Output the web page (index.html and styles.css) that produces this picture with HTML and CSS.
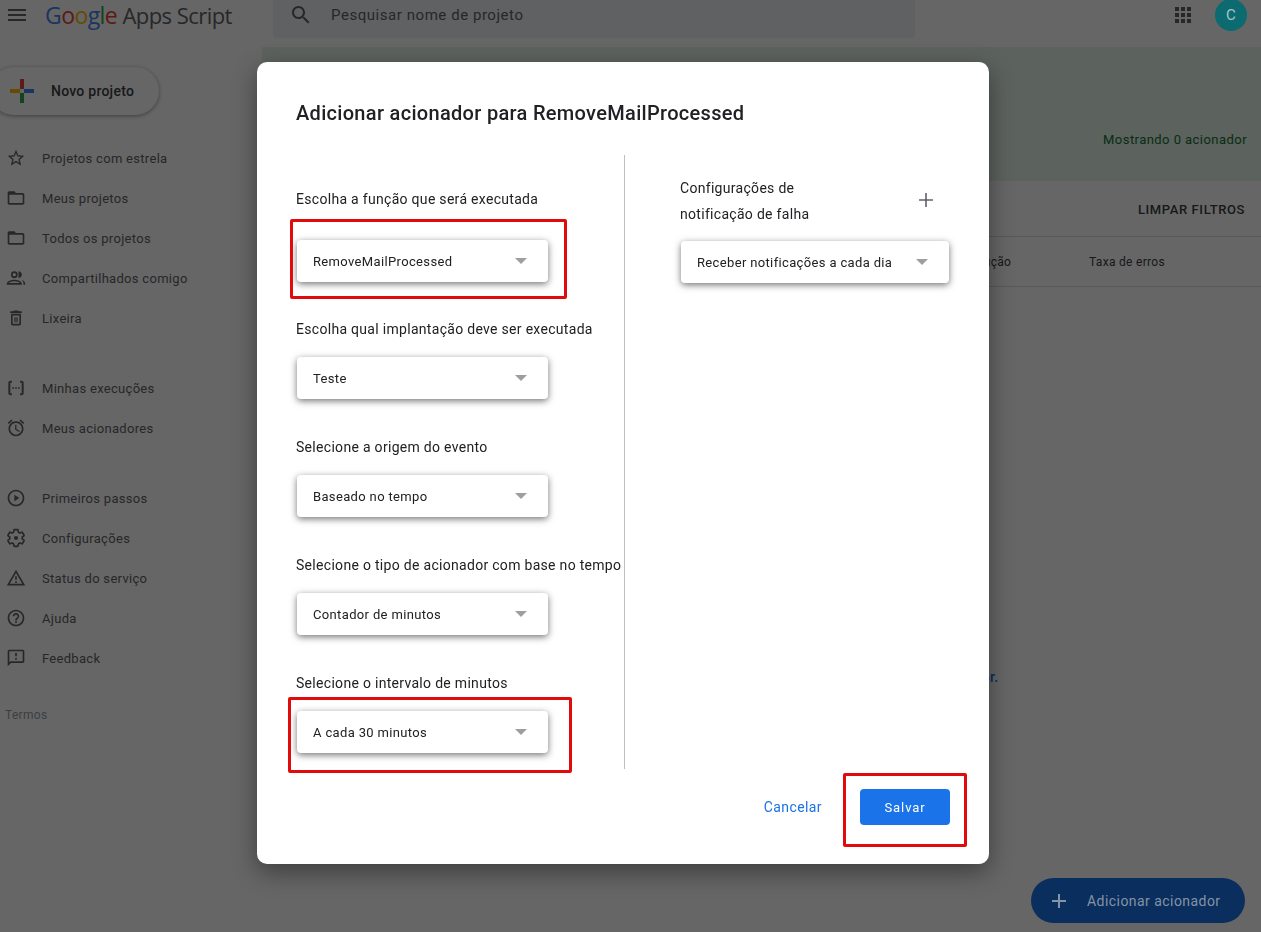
FILE: index.html
```html
<!DOCTYPE html>
<html lang="pt-BR">
<head>
<meta charset="utf-8">
<title>Google Apps Script</title>
<link rel="stylesheet" href="styles.css">
</head>
<body>
<div id="page">
	<header class="topbar">
		<svg class="menu_icon" width="18" height="12" viewBox="0 0 18 12"><path d="M0 0h18v2H0zM0 5h18v2H0zM0 10h18v2H0z"/></svg>
		<div class="logo">
			<span class="c_blue">G</span><span class="c_red">o</span><span class="c_yellow">o</span><span class="c_blue">g</span><span class="c_green">l</span><span class="c_red">e</span>
			<span class="logo_name">Apps Script</span>
		</div>
		<div class="search">
			<svg width="24" height="24" viewBox="0 0 24 24"><path d="M15.5 14h-.79l-.28-.27C15.41 12.59 16 11.11 16 9.5 16 5.91 13.09 3 9.5 3S3 5.91 3 9.5 5.91 16 9.5 16c1.61 0 3.09-.59 4.23-1.57l.27.28v.79l5 4.99L20.49 19l-4.99-5zm-6 0C7.01 14 5 11.99 5 9.5S7.01 5 9.5 5 14 7.01 14 9.5 11.99 14 9.5 14z"/></svg>
			<span>Pesquisar nome de projeto</span>
		</div>
		<svg class="apps_icon" width="18" height="18" viewBox="0 0 18 18"><path d="M1 1h4v4H1zM7 1h4v4H7zM13 1h4v4h-4zM1 7h4v4H1zM7 7h4v4H7zM13 7h4v4h-4zM1 13h4v4H1zM7 13h4v4H7zM13 13h4v4h-4z"/></svg>
		<div class="avatar">C</div>
	</header>

	<div class="body_row">
		<nav class="sidebar">
			<div class="new_project">
				<svg width="24" height="24" viewBox="0 0 24 24"><path fill="#ea4335" d="M10 0h4v10h-4z"/><path fill="#4285f4" d="M14 10h10v4H14z"/><path fill="#34a853" d="M10 14h4v10h-4z"/><path fill="#fbbc05" d="M0 10h10v4H0z"/></svg>
				<span>Novo projeto</span>
			</div>
			<ul class="nav_group">
				<li><svg viewBox="0 0 24 24"><path d="M22 9.24l-7.19-.62L12 2 9.19 8.63 2 9.24l5.46 4.73L5.82 21 12 17.27 18.18 21l-1.63-7.03L22 9.24zM12 15.4l-3.76 2.27 1-4.28-3.32-2.88 4.38-.38L12 6.1l1.71 4.04 4.38.38-3.32 2.88 1 4.28L12 15.4z"/></svg>Projetos com estrela</li>
				<li><svg viewBox="0 0 24 24"><path d="M20 6h-8l-2-2H4c-1.1 0-1.99.9-1.99 2L2 18c0 1.1.9 2 2 2h16c1.1 0 2-.9 2-2V8c0-1.1-.9-2-2-2zm0 12H4V8h16v10z"/></svg>Meus projetos</li>
				<li><svg viewBox="0 0 24 24"><path d="M20 6h-8l-2-2H4c-1.1 0-1.99.9-1.99 2L2 18c0 1.1.9 2 2 2h16c1.1 0 2-.9 2-2V8c0-1.1-.9-2-2-2zm0 12H4V8h16v10z"/></svg>Todos os projetos</li>
				<li><svg viewBox="0 0 24 24"><path d="M10 12a4 4 0 1 0 0-8 4 4 0 0 0 0 8zm0-6a2 2 0 1 1 0 4 2 2 0 0 1 0-4zM10 14c-3.3 0-9 1.6-9 4.5V20h18v-1.500C19 15.600 13.300 14 10 14zm-6.700 4c.8-1 4-2 6.700-2s5.900 1 6.700 2H3.300zM15 4v8c2.200 0 4-1.800 4-4s-1.800-4-4-4zM18 14c1.900.7 3 2.400 3 4.500V20h2v-1.500c0-2.200-2.500-4-5-4.500z"/></svg>Compartilhados comigo</li>
				<li><svg viewBox="0 0 24 24"><path d="M6 19c0 1.100.9 2 2 2h8c1.100 0 2-.9 2-2V7H6v12zM8 9h8v10H8V9zm7.500-5l-1-1h-5l-1 1H5v2h14V4h-3.500zM10 11h1.500v6H10zM12.500 11H14v6h-1.500z"/></svg>Lixeira</li>
			</ul>
			<ul class="nav_group">
				<li><svg viewBox="0 0 24 24"><path class="braces" d="M7 4.500H5.500A1.500 1.500 0 0 0 4 6v12a1.500 1.500 0 0 0 1.500 1.500H7M17 4.500h1.500A1.500 1.500 0 0 1 20 6v12a1.500 1.500 0 0 1-1.500 1.500H17"/><path d="M7.500 11h2v2h-2zM11 11h2v2h-2zM14.500 11h2v2h-2z"/></svg>Minhas execuções</li>
				<li><svg viewBox="0 0 24 24"><path d="M22 5.720l-4.600-3.860-1.290 1.530 4.600 3.860L22 5.720zM7.880 3.390L6.600 1.860 2 5.710l1.290 1.530 4.590-3.850zM12.500 8H11v6l4.750 2.850.75-1.230-4-2.370V8zM12 4c-4.970 0-9 4.030-9 9s4.020 9 9 9c4.970 0 9-4.030 9-9s-4.030-9-9-9zm0 16c-3.870 0-7-3.130-7-7s3.130-7 7-7 7 3.130 7 7-3.130 7-7 7z"/></svg>Meus acionadores</li>
			</ul>
			<ul class="nav_group">
				<li><svg viewBox="0 0 24 24"><path d="M10 8v8l6-4zM12 2C6.480 2 2 6.480 2 12s4.480 10 10 10 10-4.480 10-10S17.520 2 12 2zm0 18c-4.410 0-8-3.590-8-8s3.590-8 8-8 8 3.590 8 8-3.590 8-8 8z"/></svg>Primeiros passos</li>
				<li><svg viewBox="0 0 24 24"><path class="gear" d="M19.430 12.980c.04-.32.07-.64.07-.98s-.03-.66-.07-.98l2.110-1.650c.19-.15.24-.42.12-.64l-2-3.460c-.12-.22-.39-.3-.61-.22l-2.490 1c-.52-.4-1.080-.73-1.690-.98l-.38-2.650C14.460 2.180 14.250 2 14 2h-4c-.25 0-.46.18-.49.42l-.38 2.650c-.61.25-1.170.59-1.690.98l-2.490-1c-.23-.09-.49 0-.61.22l-2 3.460c-.13.22-.07.49.12.64l2.110 1.650c-.04.32-.07.65-.07.98s.03.66.07.98l-2.110 1.650c-.19.15-.24.42-.12.64l2 3.460c.12.22.39.3.61.22l2.490-1c.52.4 1.080.73 1.690.98l.38 2.650c.03.24.24.42.49.42h4c.25 0 .46-.18.49-.42l.38-2.650c.61-.25 1.170-.59 1.690-.98l2.490 1c.23.09.49 0 .61-.22l2-3.460c.12-.22.07-.49-.12-.64l-2.110-1.650z"/><circle cx="12" cy="12" r="2.500"/></svg>Configurações</li>
				<li><svg viewBox="0 0 24 24"><path d="M12 5.990L19.530 19H4.470L12 5.990M12 2L1 21h22L12 2zm1 14h-2v2h2v-2zm0-6h-2v4h2v-4z"/></svg>Status do serviço</li>
				<li><svg viewBox="0 0 24 24"><path d="M11 18h2v-2h-2v2zm1-16C6.480 2 2 6.480 2 12s4.480 10 10 10 10-4.480 10-10S17.520 2 12 2zm0 18c-4.410 0-8-3.590-8-8s3.590-8 8-8 8 3.590 8 8-3.590 8-8 8zm0-14c-2.210 0-4 1.790-4 4h2c0-1.100.9-2 2-2s2 .9 2 2c0 2-3 1.750-3 5h2c0-2.250 3-2.500 3-5 0-2.210-1.790-4-4-4z"/></svg>Ajuda</li>
				<li><svg viewBox="0 0 24 24"><path d="M20 2H4c-1.100 0-2 .9-2 2v18l4-4h14c1.100 0 2-.9 2-2V4c0-1.100-.9-2-2-2zm0 14H5.170L4 17.170V4h16v12zM11 12h2v2h-2zm0-6h2v4h-2z"/></svg>Feedback</li>
			</ul>
			<div class="terms">Termos</div>
		</nav>

		<main class="main">
			<div class="banner">Mostrando 0 acionador</div>
			<div class="filters">LIMPAR FILTROS</div>
			<div class="table_head">
				<span class="col_a">Última execução</span>
				<span>Taxa de erros</span>
			</div>
			<p class="empty">Nenhum acionador encontrado. <a>Adicionar acionador.</a></p>
		</main>
	</div>
	<div class="fab">
		<svg width="24" height="24" viewBox="0 0 24 24"><path d="M19 13h-6v6h-2v-6H5v-2h6V5h2v6h6z"/></svg>
		<span>Adicionar acionador</span>
	</div>
</div>

<div class="dimmed"></div>

<div class="dialog">
	<h1>Adicionar acionador para RemoveMailProcessed</h1>
	<div class="columns">
		<div class="col_left">
			<div class="field field_first">
				<label>Escolha a função que será executada</label>
				<div class="select"><span>RemoveMailProcessed</span><i></i></div>
			</div>
			<div class="field">
				<label>Escolha qual implantação deve ser executada</label>
				<div class="select"><span>Teste</span><i></i></div>
			</div>
			<div class="field">
				<label>Selecione a origem do evento</label>
				<div class="select"><span>Baseado no tempo</span><i></i></div>
			</div>
			<div class="field">
				<label>Selecione o tipo de acionador com base no tempo</label>
				<div class="select"><span>Contador de minutos</span><i></i></div>
			</div>
			<div class="field">
				<label>Selecione o intervalo de minutos</label>
				<div class="select"><span>A cada 30 minutos</span><i></i></div>
			</div>
		</div>
		<div class="col_right">
			<div class="notify_head">
				<span>Configurações de notificação de falha</span>
				<svg width="24" height="24" viewBox="0 0 24 24"><path d="M19 12.800h-6.200V19h-1.600v-6.200H5v-1.600h6.200V5h1.600v6.200H19z"/></svg>
			</div>
			<div class="select select_wide"><span>Receber notificações a cada dia</span><i></i></div>
		</div>
	</div>
	<div class="actions">
		<a class="cancel">Cancelar</a>
		<button class="save">Salvar</button>
	</div>
	<div class="mark mark_function"></div>
	<div class="mark mark_interval"></div>
	<div class="mark mark_save"></div>
</div>
</body>
</html>
```

FILE: styles.css
```css
* {
    box-sizing: border-box;
}

html, body {
    margin: 0;
    height: 100%;
    overflow: hidden;
}

body {
    font-family: Roboto, "Noto Sans", sans-serif;
    font-size: 13px;
    color: #3c4043;
    background-color: #fff;
}

#page {
    position: relative;
    height: 932px;
    overflow: hidden;
}

/* header */
.topbar {
    display: flex;
    align-items: center;
    height: 30px;
    margin-bottom: 17px;
    padding-left: 8px;
}

.menu_icon {
    flex: none;
    fill: #5f6368;
}

.logo {
    flex: none;
    width: 228px;
    margin-left: 19px;
    font-family: "Open Sans", Roboto, sans-serif;
    font-size: 23px;
    letter-spacing: -0.6px;
    white-space: nowrap;
}

.logo_name {
    font-size: 22px;
    color: #5f6368;
    letter-spacing: -0.55px;
}

.c_blue { color: #4285f4; }
.c_red { color: #ea4335; }
.c_yellow { color: #fbbc05; }
.c_green { color: #34a853; }

.search {
    flex: none;
    display: flex;
    align-items: center;
    align-self: flex-start;
    width: 642px;
    height: 38px;
    padding: 0 0 9px 16px;
    background-color: #f1f3f4;
    border-radius: 0 0 4px 4px;
    font-size: 15px;
    letter-spacing: 0.55px;
    color: #5f6368;
}

.search svg {
    margin-right: 18px;
    fill: #5f6368;
}

.apps_icon {
    flex: none;
    margin-left: 259px;
    fill: #5f6368;
}

.avatar {
    position: relative;
    z-index: 2;
    flex: none;
    width: 32px;
    height: 32px;
    margin-left: 23px;
    border-radius: 50%;
    background-color: #0b6b70;
    color: #a5c4c6;
    font-size: 15px;
    line-height: 32px;
    text-align: center;
}

.body_row {
    display: flex;
}

/* sidebar */
.sidebar {
    flex: none;
    width: 262px;
}

.new_project {
    display: flex;
    align-items: center;
    width: 169px;
    height: 48px;
    margin: 20px 0 23px -10px;
    padding-left: 20px;
    border-radius: 24px;
    background-color: #fff;
    box-shadow: 0 1px 4px rgba(0,0,0,.4);
    font-size: 14px;
    font-weight: 500;
    letter-spacing: .25px;
}

.new_project span {
    margin-left: 17px;
}

.nav_group {
    margin: 0 0 30px;
    padding: 0;
    list-style: none;
}

.nav_group li {
    display: flex;
    align-items: center;
    height: 40px;
    padding-left: 6px;
    letter-spacing: .3px;
    color: #5f6368;
}

.nav_group svg {
    flex: none;
    width: 20px;
    height: 20px;
    margin-right: 16px;
    fill: #5f6368;
}

.gear {
    fill: none;
    stroke: #5f6368;
    stroke-width: 2;
}

.braces {
    fill: none;
    stroke: #5f6368;
    stroke-width: 2.4;
}

.terms {
    margin-top: 1px;
    padding-left: 5px;
    font-size: 12px;
    letter-spacing: .3px;
    color: #9aa0a6;
}

/* main */
.main {
    flex: 1;
}

.banner {
    display: flex;
    align-items: center;
    justify-content: flex-end;
    height: 134px;
    padding: 50px 14px 0 0;
    background-color: #e6f4ea;
    color: #137333;
    letter-spacing: .45px;
}

.filters {
    height: 56px;
    padding-right: 16px;
    border-bottom: 1px solid #dadce0;
    font-weight: 500;
    line-height: 58px;
    letter-spacing: .6px;
    text-align: right;
    color: #3c4043;
}

.table_head {
    display: flex;
    height: 50px;
    padding-left: 656px;
    border-bottom: 1px solid #dadce0;
    font-size: 12px;
    line-height: 50px;
    letter-spacing: .3px;
}

.col_a {
    width: 171px;
}

.empty {
    margin: 378px 0 0;
    padding-left: 393px;
    font-size: 14px;
    letter-spacing: .3px;
    line-height: 24px;
}

.empty a {
    font-weight: 500;
    color: #1a73e8;
}

.fab {
    position: absolute;
    right: 16px;
    bottom: 9px;
    z-index: 2;
    display: flex;
    align-items: center;
    width: 214px;
    height: 45px;
    padding-left: 16px;
    border-radius: 23px;
    background-color: #0a2e5d;
    color: #8593a6;
    font-size: 14px;
    letter-spacing: .45px;
}

.fab svg {
    margin-right: 16px;
    fill: #8593a6;
}

/* dialog */
.dimmed {
    position: fixed;
    top: 0;
    left: 0;
    right: 0;
    bottom: 0;
    z-index: 1;
    background: #000;
    opacity: 0.6;
}

.dialog {
    position: absolute;
    top: 62px;
    left: 257px;
    z-index: 3;
    width: 732px;
    height: 802px;
    padding: 37px 39px 0;
    border-radius: 10px;
    background-color: #fff;
    box-shadow: 0 8px 24px rgba(0,0,0,.4);
    color: #202124;
}

.dialog h1 {
    margin: 0 0 28px;
    font-size: 20px;
    font-weight: 500;
    line-height: 28px;
    letter-spacing: .31px;
}

.columns {
    display: flex;
    height: 614px;
}

.col_left {
    flex: none;
    width: 329px;
    padding-top: 30px;
    border-right: 1px solid #bdc1c6;
}

.field {
    margin-bottom: 34px;
}

.field label {
    display: block;
    height: 28px;
    margin-bottom: 14px;
    font-size: 14px;
    line-height: 28px;
    letter-spacing: .3px;
    white-space: nowrap;
}

.field_first label {
    margin-bottom: 27px;
}

.field_first {
    margin-bottom: 33px;
}

.select {
    display: flex;
    align-items: center;
    justify-content: space-between;
    width: 251px;
    height: 42px;
    margin-left: 1px;
    padding: 0 21px 0 16px;
    border-radius: 4px;
    background-color: #fff;
    box-shadow: 0 2px 7px rgba(0,0,0,.55);
    letter-spacing: .35px;
}

.select i {
    flex: none;
    width: 0;
    height: 0;
    border-style: solid;
    border-width: 6px 6px 0;
    border-color: #9e9e9e transparent transparent;
}

.col_right {
    flex: 1;
    padding: 20px 0 0 55px;
}

.notify_head {
    display: flex;
    align-items: center;
    justify-content: space-between;
    width: 268px;
    padding-right: 10px;
    margin-bottom: 14px;
}

.notify_head span {
    width: 170px;
    font-size: 14px;
    line-height: 26px;
    letter-spacing: .3px;
}

.notify_head svg {
    margin-bottom: 2px;
    fill: #5f6368;
}

.select_wide {
    width: 268px;
    margin-left: 1px;
}

.actions {
    display: flex;
    align-items: center;
    justify-content: flex-end;
    gap: 38px;
    margin-top: 20px;
}

.cancel {
    color: #1a73e8;
    font-size: 14px;
    letter-spacing: .4px;
}

.save {
    width: 90px;
    height: 36px;
    border: 0;
    border-radius: 4px;
    background-color: #1a73e8;
    color: #fff;
    font-family: inherit;
    font-size: 13px;
    letter-spacing: .9px;
}

/* red marks drawn over the screenshot */
.mark {
    position: absolute;
    border: 3px solid #e00b0b;
    border-radius: 2px;
}

.mark_function {
    top: 157px;
    left: 33px;
    width: 277px;
    height: 80px;
}

.mark_interval {
    top: 635px;
    left: 31px;
    width: 284px;
    height: 76px;
}

.mark_save {
    top: 711px;
    left: 586px;
    width: 124px;
    height: 74px;
}
```
